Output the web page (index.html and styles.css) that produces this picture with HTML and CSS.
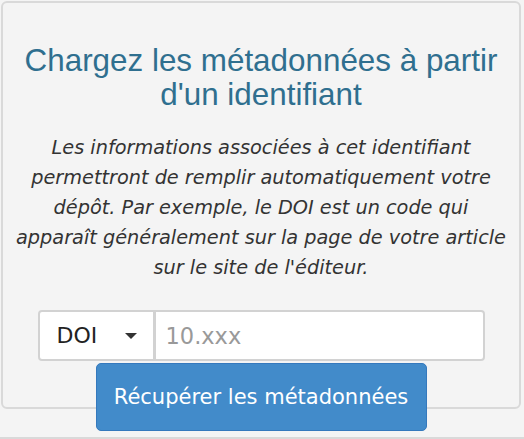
FILE: index.html
```html
<!DOCTYPE html>
<html lang="fr">
<head>
    <meta charset="UTF-8">
    <meta name="viewport" content="width=device-width, initial-scale=1.0">
    <title>Métadonnées</title>
    <link rel="stylesheet" href="styles.css">
</head>
<body>
    <div class="well">
        <h3 class="well-title">Chargez les métadonnées à partir d'un identifiant</h3>
        <p class="well-help">Les informations associées à cet identifiant permettront de remplir automatiquement votre dépôt. Par exemple, le DOI est un code qui apparaît généralement sur la page de votre article sur le site de l'éditeur.</p>
        <form class="id-form">
            <div class="input-group">
                <div class="id-type">
                    <span>DOI</span>
                    <span class="caret"></span>
                </div>
                <input type="text" class="id-value" placeholder="10.xxx">
            </div>
            <button type="button" class="btn-primary">Récupérer les métadonnées</button>
        </form>
    </div>
    <div class="footer-line"></div>
</body>
</html>
```

FILE: styles.css
```css
body {
    margin: 0;
    background: #f4f4f4;
    font-family: "DejaVu Sans", Verdana, sans-serif;
    color: #333;
}
.well {
    margin: 1px 3px 0 1px;
    height: 408px;
    border: 2px solid #d9d9d9;
    border-radius: 6px;
    background: #f4f4f4;
    padding: 41px 12px 0;
    box-sizing: border-box;
    text-align: center;
}
.well-title {
    margin: 0;
    font-family: "Liberation Sans", Arial, sans-serif;
    font-weight: normal;
    font-size: 31.4px;
    line-height: 34px;
    color: #2f6f8f;
}
.well-help {
    margin: 21px 0 0;
    font-style: italic;
    font-size: 19.3px;
    line-height: 30px;
    color: #333;
}
.id-form {
    display: flex;
    flex-direction: column;
    align-items: center;
    margin-top: 27px;
}
.input-group {
    display: flex;
    width: 447px;
    height: 51px;
    box-sizing: border-box;
    border: 2px solid #d2d2d2;
    border-radius: 4px;
    background: #fff;
}
.id-type {
    display: flex;
    align-items: center;
    justify-content: space-between;
    width: 116px;
    box-sizing: border-box;
    padding: 0 16px 0 17px;
    border-right: 3px solid #d2d2d2;
    font-size: 22px;
    color: #222;
}
.caret {
    width: 0;
    height: 0;
    border-left: 6px solid transparent;
    border-right: 6px solid transparent;
    border-top: 6px solid #333;
}
.id-value {
    flex: 1;
    border: none;
    outline: none;
    padding: 0 10px;
    font-family: "DejaVu Sans", Verdana, sans-serif;
    font-size: 22.5px;
    background: transparent;
}
.id-value::placeholder {
    color: #999;
}
.btn-primary {
    margin-top: 2px;
    width: 331px;
    height: 68px;
    border: 1px solid #3579bd;
    border-radius: 5px;
    background: #428bca;
    color: #fff;
    font-family: "DejaVu Sans", Verdana, sans-serif;
    font-size: 21px;
    position: relative;
}
.footer-line {
    margin-top: 28px;
    border-top: 2px solid #d9d9d9;
}
```
